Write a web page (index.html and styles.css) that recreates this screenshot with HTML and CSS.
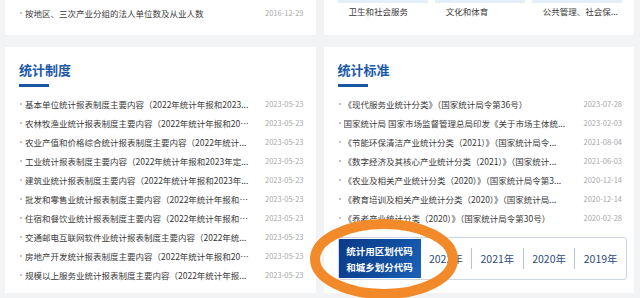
FILE: index.html
```html
<!doctype html>
<html lang="zh-CN">
<head>
    <meta charset="utf-8">
    <title>统计制度 - 统计标准</title>
    <link rel="stylesheet" href="styles.css">
</head>
<body>
<div class="page">
    <div class="row top">
        <div class="card brief">
            <ul class="list">
                <li><span class="t">按地区、三次产业分组的法人单位数及从业人数</span><span class="d">2016-12-29</span></li>
            </ul>
        </div>
        <div class="card brief">
            <div class="cats">
                <div class="cat">卫生和社会服务</div>
                <div class="cat">文化和体育</div>
                <div class="cat">公共管理、社会保...</div>
            </div>
        </div>
    </div>

    <div class="row main">
        <div class="card section">
            <h2 class="head">统计制度</h2>
            <ul class="list">
                <li><span class="t">基本单位统计报表制度主要内容（2022年统计年报和2023...</span><span class="d">2023-05-23</span></li>
                <li><span class="t">农林牧渔业统计报表制度主要内容（2022年统计年报和202...</span><span class="d">2023-05-23</span></li>
                <li><span class="t">农业产值和价格综合统计报表制度主要内容（2022年统计...</span><span class="d">2023-05-23</span></li>
                <li><span class="t">工业统计报表制度主要内容（2022年统计年报和2023年定...</span><span class="d">2023-05-23</span></li>
                <li><span class="t">建筑业统计报表制度主要内容（2022年统计年报和2023年...</span><span class="d">2023-05-23</span></li>
                <li><span class="t">批发和零售业统计报表制度主要内容（2022年统计年报和2...</span><span class="d">2023-05-23</span></li>
                <li><span class="t">住宿和餐饮业统计报表制度主要内容（2022年统计年报和2...</span><span class="d">2023-05-23</span></li>
                <li><span class="t">交通邮电互联网软件业统计报表制度主要内容（2022年统...</span><span class="d">2023-05-23</span></li>
                <li><span class="t">房地产开发统计报表制度主要内容（2022年统计年报和202...</span><span class="d">2023-05-23</span></li>
                <li><span class="t">规模以上服务业统计报表制度主要内容（2022年统计年报...</span><span class="d">2023-05-23</span></li>
            </ul>
        </div>
        <div class="card section">
            <h2 class="head">统计标准</h2>
            <ul class="list">
                <li><span class="t">《现代服务业统计分类》（国家统计局令第36号）</span><span class="d">2023-07-28</span></li>
                <li><span class="t">国家统计局 国家市场监督管理总局印发《关于市场主体统...</span><span class="d">2023-02-03</span></li>
                <li><span class="t">《节能环保清洁产业统计分类（2021）》（国家统计局令...</span><span class="d">2021-08-04</span></li>
                <li><span class="t">《数字经济及其核心产业统计分类（2021）》（国家统计...</span><span class="d">2021-06-03</span></li>
                <li><span class="t">《农业及相关产业统计分类（2020）》（国家统计局令第3...</span><span class="d">2020-12-14</span></li>
                <li><span class="t">《教育培训及相关产业统计分类（2020）》（国家统计局...</span><span class="d">2020-12-14</span></li>
                <li><span class="t">《养老产业统计分类（2020）》（国家统计局令第30号）</span><span class="d">2020-02-28</span></li>
            </ul>
            <div class="codes">
                <div class="codes-main">统计用区划代码<br>和城乡划分代码</div>
                <div class="year">2022年</div>
                <div class="year">2021年</div>
                <div class="year">2020年</div>
                <div class="year">2019年</div>
            </div>
        </div>
    </div>
</div>

<svg class="mark" width="170" height="100" viewBox="0 0 170 100">
    <ellipse cx="85" cy="50" rx="69" ry="35" fill="none" stroke="#f28a2a" stroke-width="10"/>
</svg>
</body>
</html>
```

FILE: styles.css
```css
* {
    padding: 0;
    margin: 0;
    box-sizing: border-box;
}
body {
    background: #f2f3f5;
    font-family: "Noto Sans CJK SC", "Noto Sans", sans-serif;
    color: #333333;
    width: 640px;
    height: 298px;
    overflow: hidden;
    position: relative;
}
.page {
    padding: 0 6px 0 5px;
}
.row {
    display: flex;
    gap: 8px;
}
.card {
    flex: 1;
    background: #ffffff;
    padding: 0 12px 0 14px;
}
.top {
    margin-bottom: 12px;
}
.brief {
    height: 35px;
}
.brief .list {
    padding-top: 3px;
}
.main .card {
    height: 246px;
}
.section {
    padding-top: 14px;
}
.head {
    font-size: 13px;
    line-height: 18px;
    font-weight: bold;
    color: #1c5aa8;
}
.head::after {
    content: "";
    display: block;
    width: 30px;
    height: 3px;
    margin-top: 5px;
    background: #1a56a4;
}
.section .list {
    margin-top: 7px;
}
.list {
    list-style: none;
}
.list li {
    display: flex;
    align-items: center;
    height: 19px;
    font-size: 8.5px;
    padding-left: 1px;
}
.list li::before {
    content: "";
    flex: none;
    width: 2px;
    height: 2px;
    margin-right: 3px;
    background: #c4c4c4;
}
.t {
    flex: 1;
    min-width: 0;
    white-space: nowrap;
    overflow: hidden;
    text-overflow: ellipsis;
    color: #3a3a3a;
}
.d {
    flex: none;
    margin-left: 14px;
    font-size: 7.5px;
    color: #a8a8a8;
}
.cats {
    display: flex;
    gap: 7px;
}
.cat {
    flex: 1;
    border-top: 3px solid #e6eef9;
    padding-left: 11px;
    font-size: 8.5px;
    line-height: 17px;
    color: #3a3a3a;
}
.codes {
    display: flex;
    align-items: center;
    height: 43px;
    margin: 10px -5px 0 0;
    border: 1px solid #cdd6e2;
    border-radius: 3px;
    overflow: hidden;
}
.codes-main {
    flex: none;
    width: 82px;
    height: 39px;
    margin: 1px 0;
    padding-top: 4px;
    background: linear-gradient(120deg, #0a3b88 0%, #114c9e 55%, #1b63b8 100%);
    color: #ffffff;
    font-size: 9.5px;
    line-height: 16px;
    font-weight: bold;
    text-align: center;
}
.year {
    flex: 1;
    text-align: center;
    font-size: 10.5px;
    color: #2c4c7c;
    border-left: 1px solid #b7c2d2;
    line-height: 21px;
}
.codes-main + .year {
    border-left: none;
}
.mark {
    position: absolute;
    left: 299px;
    top: 209px;
}
```
